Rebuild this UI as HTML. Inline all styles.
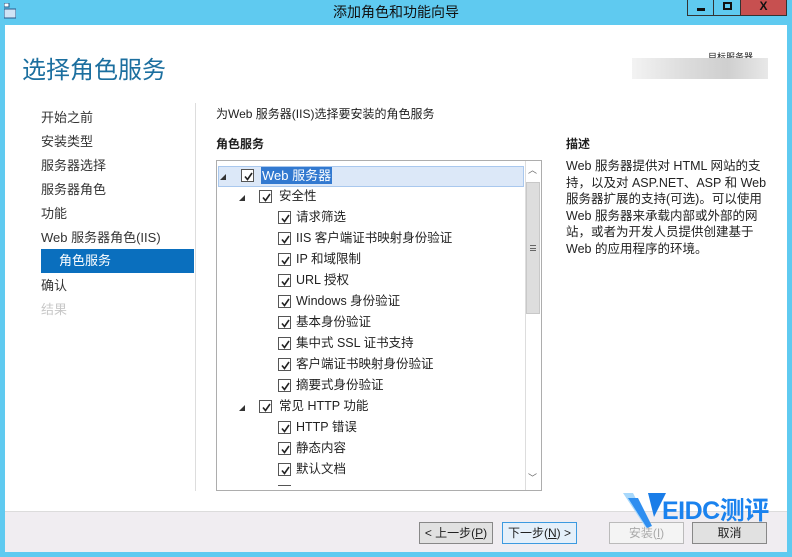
<!DOCTYPE html>
<html><head><meta charset="utf-8"><style>
*{margin:0;padding:0;box-sizing:border-box}
body{width:792px;height:557px;overflow:hidden;background:#5fcaf0;font-family:"Liberation Sans","Noto Sans CJK SC",sans-serif;font-size:12px;color:#1e1e1e;position:relative}
.abs{position:absolute}
.win{left:5px;top:25px;width:782px;height:527px;background:#fff}
.footer{left:5px;top:511px;width:782px;height:41px;background:#f0edf1;border-top:1px solid #dcdcdc}
.nav{left:41px;font-size:13px;color:#333;height:24px;line-height:24px;width:153px}
.item{position:absolute;height:21px;line-height:21px;white-space:nowrap;font-size:12.5px;color:#222}
.cb{position:absolute;width:13px;height:13px;border:1px solid #555;background:#fff;top:4px}
.cb svg{position:absolute;left:1px;top:1px}
.tri{position:absolute;top:8px;width:0;height:0;border-left:6px solid transparent;border-bottom:6px solid #333}
.btn{position:absolute;top:522px;height:22px;border:1px solid #888;background:#e1e1e1;font-size:12px;text-align:center;line-height:20px}
</style></head><body>
<svg class="abs" style="left:4px;top:3px" width="12" height="16"><rect x="0" y="0" width="5" height="4" fill="#fff" stroke="#2a5a8a"/><rect x="0" y="6" width="12" height="9" fill="#cfe3f5" stroke="#2a5a8a"/></svg>
<div class="abs" style="left:0;top:2px;width:792px;text-align:center;font-size:14px;color:#111">添加角色和功能向导</div>
<div class="abs" style="left:687px;top:0;width:27px;height:16px;border:1px solid #333;border-top:none"><div class="abs" style="left:9px;top:8px;width:8px;height:3px;background:#111"></div></div>
<div class="abs" style="left:713px;top:0;width:28px;height:16px;border:1px solid #333;border-top:none"><div class="abs" style="left:9px;top:2px;width:9px;height:8px;border:2px solid #111"></div></div>
<div class="abs" style="left:740px;top:0;width:47px;height:16px;background:#c75050;border:1px solid #333;border-top:none;text-align:center;font-weight:bold;font-size:12px;line-height:13px;color:#111">X</div>
<div class="abs win"></div>
<div class="abs" style="left:22px;top:50px;font-size:24px;color:#1c6f9f">选择角色服务</div>
<div class="abs" style="left:708px;top:50px;font-size:9px;color:#222">目标服务器</div>
<div class="abs" style="left:632px;top:58px;width:136px;height:21px;background:linear-gradient(90deg,#f3f3f3,#dcdcdc 40%,#cfcfcf 70%,#e8e8e8)"></div>
<div class="abs nav" style="top:106px">开始之前</div>
<div class="abs nav" style="top:130px">安装类型</div>
<div class="abs nav" style="top:154px">服务器选择</div>
<div class="abs nav" style="top:178px">服务器角色</div>
<div class="abs nav" style="top:202px">功能</div>
<div class="abs nav" style="top:226px">Web 服务器角色(IIS)</div>
<div class="abs nav" style="top:249px;background:#0a6fbe;color:#fff;padding-left:18px">角色服务</div>
<div class="abs nav" style="top:274px">确认</div>
<div class="abs nav" style="top:298px;color:#c8c8c8">结果</div>
<div class="abs" style="left:195px;top:103px;width:1px;height:388px;background:#ddd"></div>
<div class="abs" style="left:216px;top:105px;font-size:12px">为Web 服务器(IIS)选择要安装的角色服务</div>
<div class="abs" style="left:216px;top:135px;font-size:12px;font-weight:bold">角色服务</div>
<div class="abs" style="left:566px;top:135px;font-size:12px;font-weight:bold">描述</div>
<div class="abs" style="left:566px;top:158px;white-space:nowrap;font-size:12.5px;line-height:16.6px;color:#222">Web 服务器提供对 HTML 网站的支<br>持，以及对 ASP.NET、ASP 和 Web<br>服务器扩展的支持(可选)。可以使用<br>Web 服务器来承载内部或外部的网<br>站，或者为开发人员提供创建基于<br>Web 的应用程序的环境。</div>
<div class="abs" style="left:216px;top:160px;width:326px;height:331px;border:1px solid #adadad;overflow:hidden;background:#fff">
 <div class="abs" style="left:1px;top:5px;width:306px;height:21px;background:#dce8f8;border:1px solid #a9c8ee"></div>
 <div id="tree"></div>
 <div class="abs" style="left:308px;top:0;width:17px;height:329px;background:#fff;border-left:1px solid #ddd"></div>
 <div class="abs" style="left:309px;top:21px;width:14px;height:132px;background:#ddd;border:1px solid #c8c8c8"></div>
 <div class="abs" style="left:313px;top:84px;width:6px;height:6px;border-top:1px solid #666;border-bottom:1px solid #666"><div style="margin-top:2px;height:1px;background:#666"></div></div>
 <div class="abs" style="left:311px;top:2px;font-size:9px;color:#666">︿</div>
 <div class="abs" style="left:311px;top:310px;font-size:9px;color:#666">﹀</div>
</div>
<script>
var items=[[0,'Web 服务器',1],[1,'安全性',1],[2,'请求筛选'],[2,'IIS 客户端证书映射身份验证'],[2,'IP 和域限制'],[2,'URL 授权'],[2,'Windows 身份验证'],[2,'基本身份验证'],[2,'集中式 SSL 证书支持'],[2,'客户端证书映射身份验证'],[2,'摘要式身份验证'],[1,'常见 HTTP 功能',1],[2,'HTTP 错误'],[2,'静态内容'],[2,'默认文档']];
var h='',cbx=[24,42,61],tx=[44,62,79],trx=[3,22];
var chk='<svg width="11" height="11"><path d="M2 5.5L4.5 8.5L9 2" stroke="#222" stroke-width="1.6" fill="none"/></svg>';
items.forEach(function(it,i){var y=4+i*21;var l=it[0];
 if(it[2])h+='<div class="tri" style="left:'+trx[l]+'px;top:'+(y+9)+'px"></div>';
 h+='<div class="cb" style="left:'+cbx[l]+'px;top:'+(y+4)+'px">'+chk+'</div>';
 var st=i==0?'background:#3279d0;color:#fff;padding:0 1px;height:17px;line-height:17px;top:'+(y+2)+'px;font-size:13px':'top:'+y+'px';
 h+='<div class="item" style="left:'+tx[l]+'px;'+st+'">'+it[1]+'</div>';});
h+='<div class="abs" style="left:61px;top:324px;width:13px;height:1px;background:#555"></div>';
document.getElementById('tree').innerHTML=h;
</script>
<div class="abs footer"></div>
<div class="btn" style="left:419px;width:74px">&lt; 上一步(<u>P</u>)</div>
<div class="btn" style="left:502px;width:75px;border-color:#3c9ae0;background:#e5f0fa">下一步(<u>N</u>) &gt;</div>
<div class="btn" style="left:609px;width:75px;color:#aaa;background:#f4f4f4;border-color:#bbb">安装(<u>I</u>)</div>
<div class="btn" style="left:692px;width:75px">取消</div>
<svg class="abs" style="left:620px;top:490px" width="50" height="40"><path d="M3 3L13 3L30 36L26 38Z" fill="#a8d8fb"/><path d="M8 8L18 8L32 36L27 38Z" fill="#2e8ef0"/><path d="M28 3L46 3L34 27Z" fill="#1a7de8"/></svg>
<div class="abs" style="left:662px;top:496px;font-size:25px;line-height:30px;font-weight:bold;color:#1a82ee;letter-spacing:-0.5px">EIDC测评</div>
</body></html>
